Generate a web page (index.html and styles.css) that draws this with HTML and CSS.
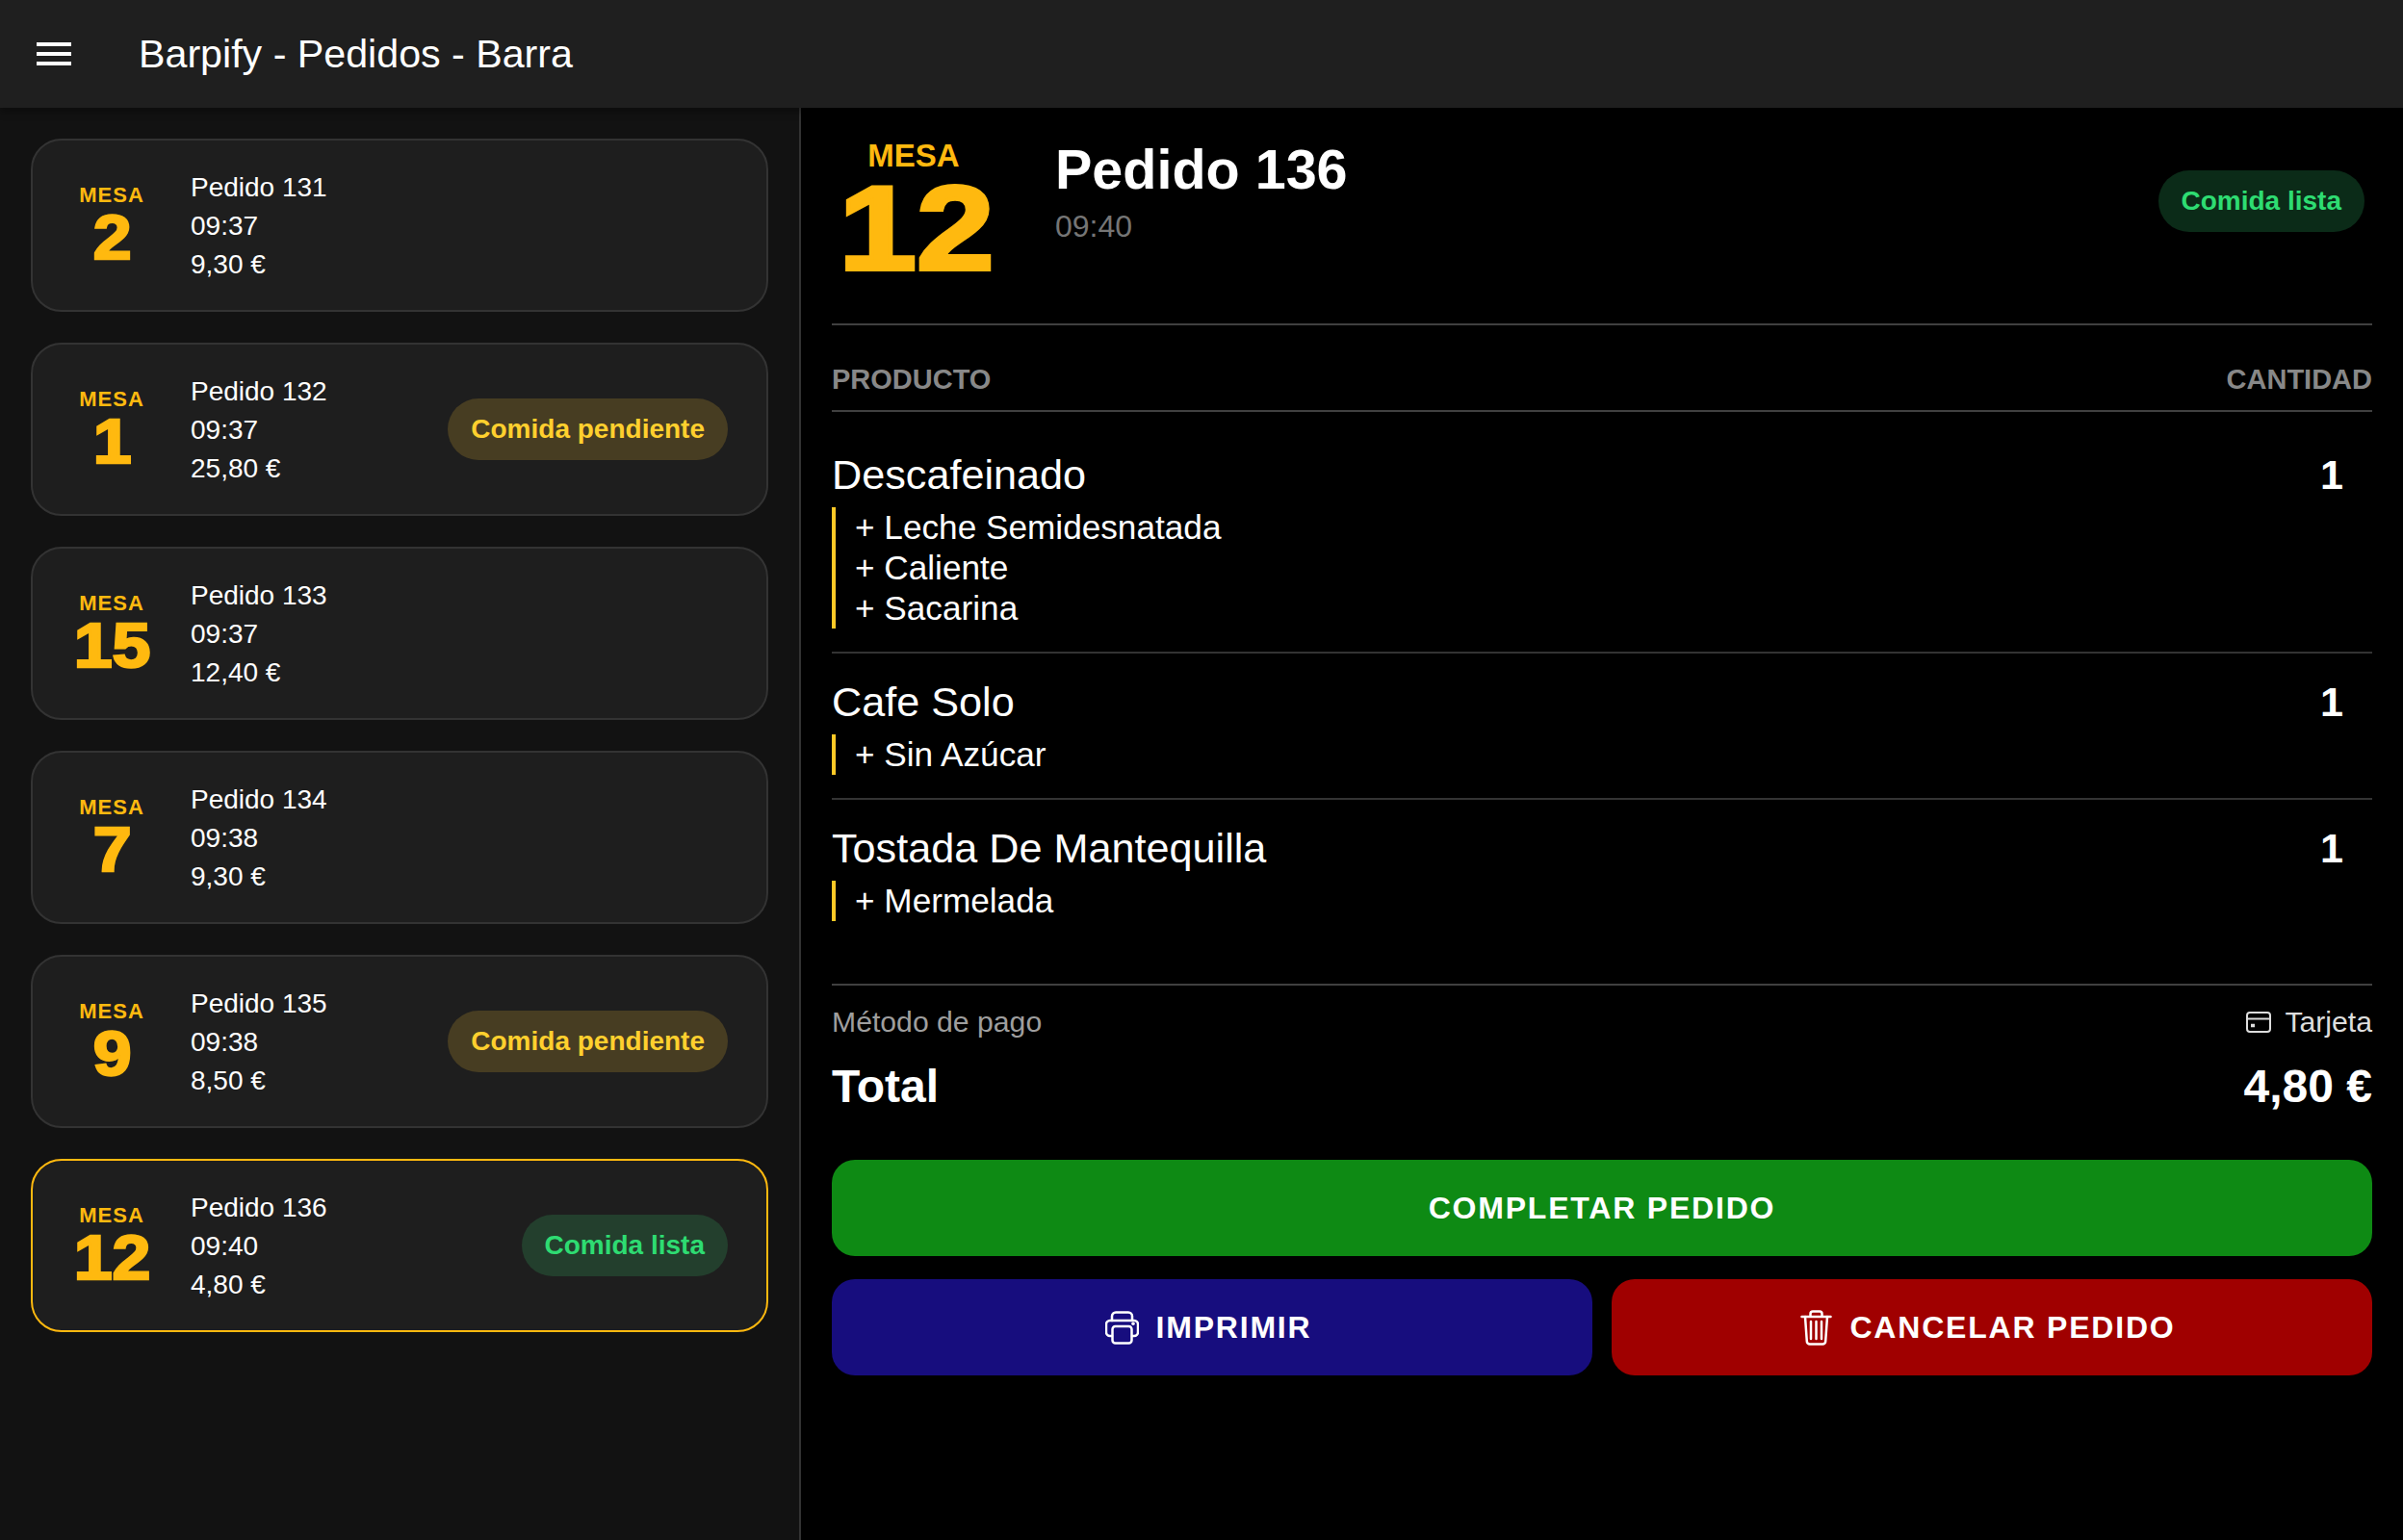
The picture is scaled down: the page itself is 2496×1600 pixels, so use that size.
FILE: index.html
```html
<!DOCTYPE html>
<html lang="es">
<head>
<meta charset="utf-8">
<title>Barpify - Pedidos - Barra</title>
<link rel="stylesheet" href="styles.css">
</head>
<body>
<header class="appbar">
  <svg class="menu-icon" viewBox="0 0 24 24" aria-hidden="true"><path d="M3 18h18v-2H3v2zm0-5h18v-2H3v2zm0-7v2h18V6H3z"/></svg>
  <h1 class="appbar-title">Barpify - Pedidos - Barra</h1>
</header>
<div class="layout">
  <aside class="sidebar">
    <article class="card">
      <div class="mesa"><span class="mesa-label">MESA</span><span class="mesa-num">2</span></div>
      <div class="info"><span>Pedido 131</span><span>09:37</span><span>9,30 €</span></div>
    </article>
    <article class="card">
      <div class="mesa"><span class="mesa-label">MESA</span><span class="mesa-num">1</span></div>
      <div class="info"><span>Pedido 132</span><span>09:37</span><span>25,80 €</span></div>
      <span class="pill pill-pending">Comida pendiente</span>
    </article>
    <article class="card">
      <div class="mesa"><span class="mesa-label">MESA</span><span class="mesa-num">15</span></div>
      <div class="info"><span>Pedido 133</span><span>09:37</span><span>12,40 €</span></div>
    </article>
    <article class="card">
      <div class="mesa"><span class="mesa-label">MESA</span><span class="mesa-num">7</span></div>
      <div class="info"><span>Pedido 134</span><span>09:38</span><span>9,30 €</span></div>
    </article>
    <article class="card">
      <div class="mesa"><span class="mesa-label">MESA</span><span class="mesa-num">9</span></div>
      <div class="info"><span>Pedido 135</span><span>09:38</span><span>8,50 €</span></div>
      <span class="pill pill-pending">Comida pendiente</span>
    </article>
    <article class="card card-active">
      <div class="mesa"><span class="mesa-label">MESA</span><span class="mesa-num">12</span></div>
      <div class="info"><span>Pedido 136</span><span>09:40</span><span>4,80 €</span></div>
      <span class="pill pill-ready">Comida lista</span>
    </article>
  </aside>
  <main class="detail">
    <section class="detail-head">
      <div class="big-mesa"><span class="big-mesa-label">MESA</span><span class="big-mesa-num">12</span></div>
      <div class="detail-title">
        <h2>Pedido 136</h2>
        <span class="detail-time">09:40</span>
      </div>
      <span class="pill pill-ready-dark">Comida lista</span>
    </section>
    <div class="table-head"><span>PRODUCTO</span><span>CANTIDAD</span></div>
    <section class="item item-first">
      <div class="item-row"><span class="item-name">Descafeinado</span><span class="item-qty">1</span></div>
      <ul class="mods"><li>+ Leche Semidesnatada</li><li>+ Caliente</li><li>+ Sacarina</li></ul>
    </section>
    <section class="item">
      <div class="item-row"><span class="item-name">Cafe Solo</span><span class="item-qty">1</span></div>
      <ul class="mods"><li>+ Sin Azúcar</li></ul>
    </section>
    <section class="item item-last">
      <div class="item-row"><span class="item-name">Tostada De Mantequilla</span><span class="item-qty">1</span></div>
      <ul class="mods"><li>+ Mermelada</li></ul>
    </section>
    <section class="summary">
      <div class="pay-row">
        <span class="pay-label">Método de pago</span>
        <span class="pay-value">
          <svg class="card-icon" viewBox="0 0 26 22" aria-hidden="true"><rect x="1" y="1" width="24" height="20" rx="3"/><path d="M1 7.500h24"/><path class="card-dot" d="M5 14.500h4"/></svg>
          Tarjeta
        </span>
      </div>
      <div class="total-row"><span>Total</span><span>4,80 €</span></div>
    </section>
    <section class="actions">
      <button class="btn btn-green">COMPLETAR PEDIDO</button>
      <div class="btn-row">
        <button class="btn btn-blue">
          <svg class="btn-icon icon-print" viewBox="0 0 35 35" aria-hidden="true"><path d="M7 10V5.500A4 4 0 0 1 11 1.500h13A4 4 0 0 1 28 5.500V10"/><path d="M7 26H5A4 4 0 0 1 1 22V14A4 4 0 0 1 5 10h25a4 4 0 0 1 4 4v8a4 4 0 0 1-4 4h-2"/><rect x="7.500" y="16" width="20" height="17.500" rx="3"/><path class="icon-dot" d="M29 13.300h.01"/></svg>
          IMPRIMIR
        </button>
        <button class="btn btn-red">
          <svg class="btn-icon icon-trash" viewBox="0 0 33 37" aria-hidden="true"><path d="M1.500 7h30"/><path d="M10.500 6.500V4A2.500 2.500 0 0 1 13 1.500h7A2.500 2.500 0 0 1 22.500 4v2.500"/><path d="M5 7l1.800 25.500a3 3 0 0 0 3 3h13.400a3 3 0 0 0 3-3L28 7"/><path d="M11 12v18M16.500 12v18M22 12v18"/></svg>
          CANCELAR PEDIDO
        </button>
      </div>
    </section>
  </main>
</div>
</body>
</html>
```

FILE: styles.css
```css
* { box-sizing: border-box; }
html, body { margin: 0; height: 100%; }
body {
  background: #000;
  color: #fff;
  font-family: "Liberation Sans", Arial, sans-serif;
  overflow: hidden;
}
.appbar {
  position: relative;
  z-index: 2;
  height: 112px;
  background: #1f1f1f;
  display: flex;
  align-items: center;
  padding: 0 32px;
  gap: 64px;
  box-shadow: 0 4px 8px rgba(0, 0, 0, .35);
}
.menu-icon { width: 48px; height: 48px; fill: #fff; flex: none; }
.appbar-title { margin: 0; font-size: 41.2px; font-weight: 400; line-height: 48px; }
.layout { display: flex; height: 1488px; }
.sidebar {
  width: 832px;
  flex: none;
  background: #121212;
  border-right: 2px solid #333;
  padding: 32px 32px 0;
  display: flex;
  flex-direction: column;
  gap: 32px;
}
.card {
  height: 180px;
  background: #1e1e1e;
  border: 2px solid #333;
  border-radius: 32px;
  display: flex;
  align-items: center;
  padding: 0 40px 0 34px;
}
.card-active { border-color: #ffb90f; }
.mesa { width: 96px; display: flex; flex-direction: column; align-items: center; flex: none; margin-right: 34px; color: #ffb90f; }
.mesa-label { font-size: 22px; font-weight: 700; letter-spacing: 1px; line-height: 26px; margin-bottom: 2px; }
.mesa-num { display: inline-block; transform: scaleX(1.12); font-size: 64px; font-weight: 700; line-height: 58px; margin: 0 0 2px 2px; -webkit-text-stroke: 2.500px #ffb90f; }
.info { display: flex; flex-direction: column; font-size: 28px; line-height: 40px; flex: 1; padding-top: 2px; }
.pill {
  font-size: 28px;
  font-weight: 700;
  line-height: 32px;
  padding: 16px 24px;
  border-radius: 32px;
  flex: none;
}
.pill-pending { background: #473d22; color: #ffd02e; }
.pill-ready { background: #233f2d; color: #2edc72; }
.pill-ready-dark { background: #0b2b18; color: #2edc72; margin: 65px 8px 0 auto; align-self: flex-start; }
.detail { flex: 1; padding: 0 32px; display: flex; flex-direction: column; }
.detail-head { height: 226px; display: flex; border-bottom: 2px solid #404040; }
.big-mesa { width: 176px; display: flex; flex-direction: column; align-items: center; color: #ffb90f; padding-top: 31px; margin-right: 56px; }
.big-mesa-label { font-size: 33px; font-weight: 700; line-height: 38px; margin-right: 6px; }
.big-mesa-num { display: inline-block; transform: scaleX(1.17); font-size: 124px; font-weight: 700; line-height: 112px; -webkit-text-stroke: 4px #ffb90f; }
.detail-title { padding-top: 32px; }
.detail-title h2 { margin: 0; font-size: 57.500px; line-height: 64px; font-weight: 700; }
.detail-time { display: block; margin-top: 7px; font-size: 32px; line-height: 40px; color: #757575; }
.table-head {
  height: 90px;
  display: flex;
  justify-content: space-between;
  align-items: center;
  border-bottom: 2px solid #404040;
  font-size: 29px;
  font-weight: 700;
  color: #888;
  padding-top: 24px;
}
.item { border-bottom: 2px solid #333; padding-bottom: 24px; padding-top: 24px; }
.item-first { padding-top: 39px; }
.item-last { border-bottom: 0; }
.item-row { display: flex; justify-content: space-between; align-items: center; height: 52px; }
.item-name { font-size: 43.200px; }
.item-qty { font-size: 43.200px; font-weight: 700; width: 54px; }
.mods { list-style: none; margin: 8px 0 0; padding: 0 0 0 20px; border-left: 4px solid #ffc926; font-size: 35.200px; line-height: 42px; }
.summary { margin-top: 41px; border-top: 2px solid #404040; padding-top: 18px; }
.pay-row { display: flex; justify-content: space-between; align-items: center; font-size: 30.200px; line-height: 40px; }
.pay-label { color: #9e9e9e; }
.pay-value { display: flex; align-items: center; gap: 14px; color: #ddd; }
.card-icon { width: 26px; height: 22px; fill: none; stroke: #ddd; stroke-width: 2; }
.card-dot { stroke-width: 3.500; }
.total-row { display: flex; justify-content: space-between; margin-top: 15px; font-size: 48px; line-height: 64px; font-weight: 700; }
.actions { margin-top: 44px; display: flex; flex-direction: column; gap: 24px; }
.btn {
  height: 100px;
  border: 0;
  border-radius: 24px;
  color: #fff;
  font: 700 32px "Liberation Sans", Arial, sans-serif;
  letter-spacing: 1.800px;
  display: flex;
  align-items: center;
  justify-content: center;
  gap: 18px;
}
.btn-row { display: flex; gap: 20px; }
.btn-row .btn { flex: 1; padding: 0 8px 0 0; }
.btn-green { background: #0e8a14; }
.btn-blue { background: #170d7e; }
.btn-red { background: #a00000; }
.btn-icon { fill: none; stroke: #fff; stroke-width: 2.500; stroke-linecap: round; stroke-linejoin: round; }
.icon-print { width: 35px; height: 35px; }
.icon-trash { width: 33px; height: 37px; }
.icon-dot { stroke-width: 3.500; }
```
